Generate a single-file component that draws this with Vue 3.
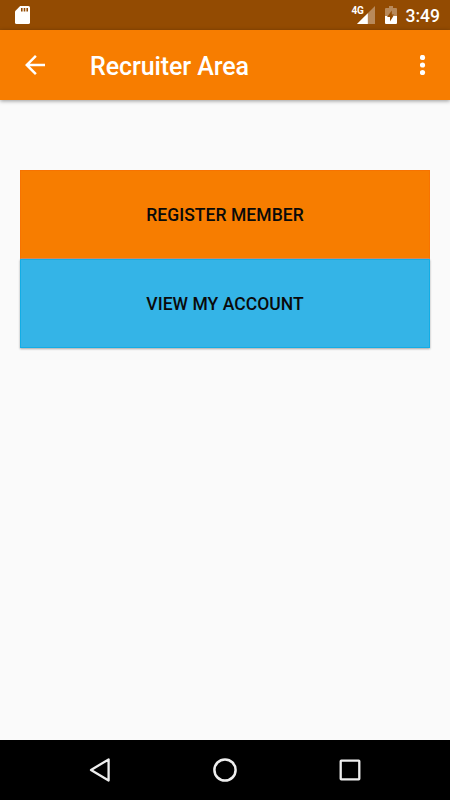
<template>
  <div class="screen">
    <div class="status-bar">
      <svg class="sd-icon" width="15" height="18" viewBox="0 0 15 18">
        <path fill="#fff" d="M5.2 0H13.4Q15 0 15 1.6V16.4Q15 18 13.4 18H1.6Q0 18 0 16.4V5.2Z" />
        <path fill="#934b02" d="M6 2h1.6v3.4H6zM8.7 2h1.6v3.4H8.7zM11.4 2H13v3.4h-1.6z" />
      </svg>
      <div class="status-right">
        <div class="signal">
          <span class="network">4G</span>
          <svg width="18" height="18" viewBox="0 0 18 18">
            <path fill="#fff" fill-opacity="0.35" d="M18 0V18H0Z" />
            <path fill="#fff" d="M10.8 7.2V18H0Z" />
          </svg>
        </div>
        <svg class="battery" width="12" height="18" viewBox="0 0 12 18">
          <path fill="#fff" fill-opacity="0.35" d="M4 0h4v2h3q1 0 1 1v7H7.2L9.4 8.4H6.8V4.5L2.8 10H0V3q0-1 1-1h3z" />
          <path fill="#fff" d="M0 10h2.4v.9H5v4.5L8.4 10H12v7q0 1-1 1H1q-1 0-1-1z" />
        </svg>
        <span class="clock">{{ time }}</span>
      </div>
    </div>

    <header class="toolbar">
      <button class="icon-button back" aria-label="Back">
        <svg width="20" height="20" viewBox="4 4 16 16">
          <path fill="#fff" d="M20 11H7.83l5.59-5.59L12 4l-8 8 8 8 1.41-1.41L7.83 13H20v-2z" />
        </svg>
      </button>
      <h1 class="title">Recruiter Area</h1>
      <button class="icon-button more" aria-label="More options">
        <svg width="6" height="20" viewBox="0 0 6 20">
          <circle cx="2.5" cy="2.5" r="2.6" fill="#fff" />
          <circle cx="2.5" cy="10" r="2.6" fill="#fff" />
          <circle cx="2.5" cy="17.5" r="2.6" fill="#fff" />
        </svg>
      </button>
    </header>

    <main class="content">
      <button
        v-for="action in actions"
        :key="action.label"
        class="action"
        :class="action.type"
      >
        {{ action.label }}
      </button>
    </main>

    <nav class="nav-bar">
      <svg width="24" height="26" viewBox="0 0 24 26">
        <path d="M20.6 2.4V23.6L3 13Z" fill="none" stroke="#eee" stroke-width="2.3" stroke-linejoin="round" />
      </svg>
      <svg width="24" height="26" viewBox="0 0 24 26">
        <circle cx="12" cy="13" r="10.6" fill="none" stroke="#eee" stroke-width="2.5" />
      </svg>
      <svg width="24" height="26" viewBox="0 0 24 26">
        <rect x="2.7" y="3.7" width="18.6" height="18.6" rx="0.6" fill="none" stroke="#eee" stroke-width="2.3" />
      </svg>
    </nav>
  </div>
</template>

<script setup>
import { ref } from 'vue';

const time = ref('3:49');

const actions = [
  { label: 'Register Member', type: 'register' },
  { label: 'View My Account', type: 'account' },
];
</script>

<style>
body {
  margin: 0;
}
</style>

<style scoped>
.screen {
  display: flex;
  flex-direction: column;
  height: 100vh;
  background-color: #fafafa;
  font-family: Roboto, sans-serif;
}

.status-bar {
  display: flex;
  justify-content: space-between;
  align-items: center;
  height: 30px;
  box-sizing: border-box;
  padding: 0 10px 0 15px;
  background-color: #934b02;
  flex-shrink: 0;
}

.status-right {
  display: flex;
  align-items: center;
}

.signal {
  display: flex;
  align-items: flex-start;
  height: 18px;
}

.network {
  font-size: 10px;
  line-height: 10px;
  font-weight: bold;
  color: #fff;
  width: 5px;
  letter-spacing: -0.4px;
  white-space: nowrap;
}

.battery {
  margin-left: 10px;
}

.clock {
  margin-left: 9px;
  padding-top: 2px;
  font-size: 17.5px;
  line-height: 28px;
  font-weight: 500;
  color: #fff;
}

.toolbar {
  display: flex;
  align-items: center;
  height: 70px;
  box-sizing: border-box;
  padding: 0 24px 0 25px;
  background-color: #f77d00;
  box-shadow: 0 1px 4px rgba(0, 0, 0, 0.4);
  flex-shrink: 0;
}

.icon-button {
  display: flex;
  padding: 0;
  border: none;
  background: none;
}

.title {
  flex-grow: 1;
  margin: 4px 0 0 45px;
  font-size: 25px;
  line-height: 30px;
  font-weight: 500;
  letter-spacing: -0.08px;
  color: #fff;
}

.content {
  display: flex;
  flex-direction: column;
  flex-grow: 1;
  padding: 70px 20px 0;
}

.action {
  height: 89px;
  padding: 1px 0 0;
  border: 1px solid;
  font-family: inherit;
  font-size: 17.5px;
  font-weight: 500;
  letter-spacing: 0.05px;
  text-transform: uppercase;
  color: #0a0a0a;
}

.register {
  padding-top: 0;
  background-color: #f77d00;
  border-color: #f77300 #f77300 #d98b62;
}

.account {
  background-color: #34b4e7;
  border-color: #12ade6;
  box-shadow: 0 1px 2px rgba(0, 0, 0, 0.35);
}

.nav-bar {
  display: flex;
  justify-content: center;
  align-items: center;
  gap: 101px;
  height: 60px;
  background-color: #000;
  flex-shrink: 0;
}
</style>
